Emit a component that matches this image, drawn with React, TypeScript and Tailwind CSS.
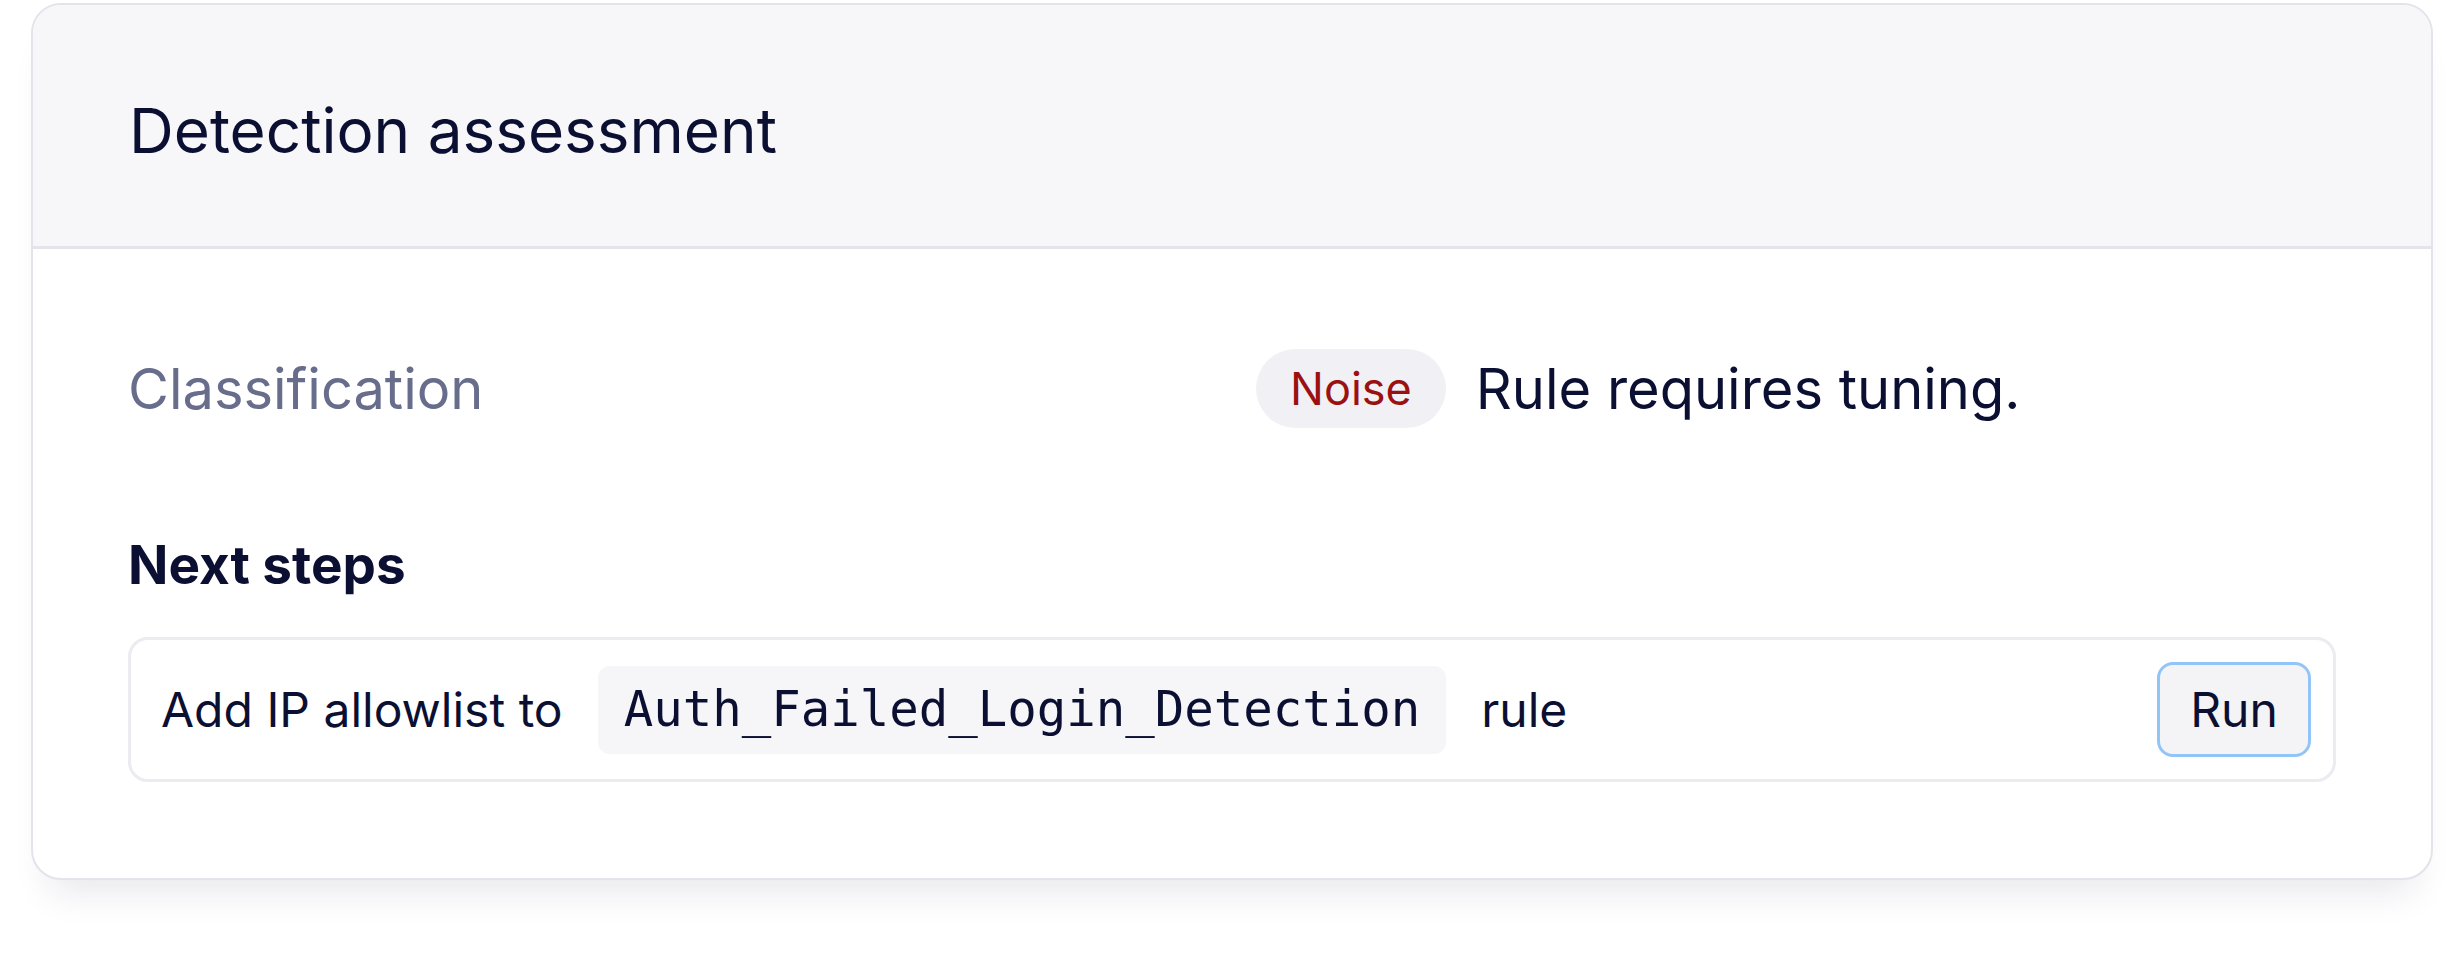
import React from 'react';

const sans = { fontFamily: 'Inter, "Noto Sans", sans-serif' };

const DetectionAssessment: React.FC = () => {
  return (
    <div className="rounded-[30px] border-2 border-[#e3e3ea] bg-white overflow-hidden shadow-[0_30px_36px_-18px_rgba(30,30,80,0.10)]">
      <div className="h-[244px] flex items-center pt-[10px] px-24 bg-[#f7f7f9] border-b-[3px] border-[#e4e4ea]">
        <h2 className="text-[62px] leading-none font-normal text-[#0b1033]">Detection assessment</h2>
      </div>

      <div className="px-[95px] pt-[100px] pb-[96px]">
        <div className="grid grid-cols-2 gap-x-12 items-center">
          <div className="text-[56px] leading-none text-[#676d8a]">Classification</div>
          <div className="flex items-center gap-[30px]">
            <span className="h-[79px] px-[34px] flex items-center rounded-full bg-[#f1f0f4] text-[45px] leading-none text-[#9b1111]">
              Noise
            </span>
            <span className="text-[56px] leading-none text-[#0b1033]">Rule requires tuning.</span>
          </div>
        </div>

        <h3 className="mt-[105px] text-[53px] leading-[64px] font-bold text-[#0b1033]">Next steps</h3>

        <div className="mt-[40px] flex items-center pl-[30px] pr-[22px] py-[22px] border-[3px] border-[#ebebf0] rounded-[20px]">
          <span className="text-[48px] leading-none text-[#0b1033]">Add IP allowlist to</span>
          <code
            className="ml-[35px] h-[88px] px-[26px] flex items-center rounded-[12px] bg-[#f6f6f8] text-[49px] leading-none text-[#0b1033]"
            style={{ fontFamily: '"DejaVu Sans Mono", "Liberation Mono", monospace' }}
          >
            Auth_Failed_Login_Detection
          </code>
          <span className="ml-[35px] text-[48px] leading-none text-[#0b1033]">rule</span>
          <button className="ml-auto h-[95px] w-[154px] flex items-center justify-center border-[3px] border-[#92c5f7] rounded-[16px] bg-[#f4f4f7] text-[48px] leading-none text-[#0b1033]">
            Run
          </button>
        </div>
      </div>
    </div>
  );
};

export default function App() {
  return (
    <div className="w-[2464px] h-[972px] bg-white px-[31px] pt-[3px]" style={sans}>
      <DetectionAssessment />
    </div>
  );
}
